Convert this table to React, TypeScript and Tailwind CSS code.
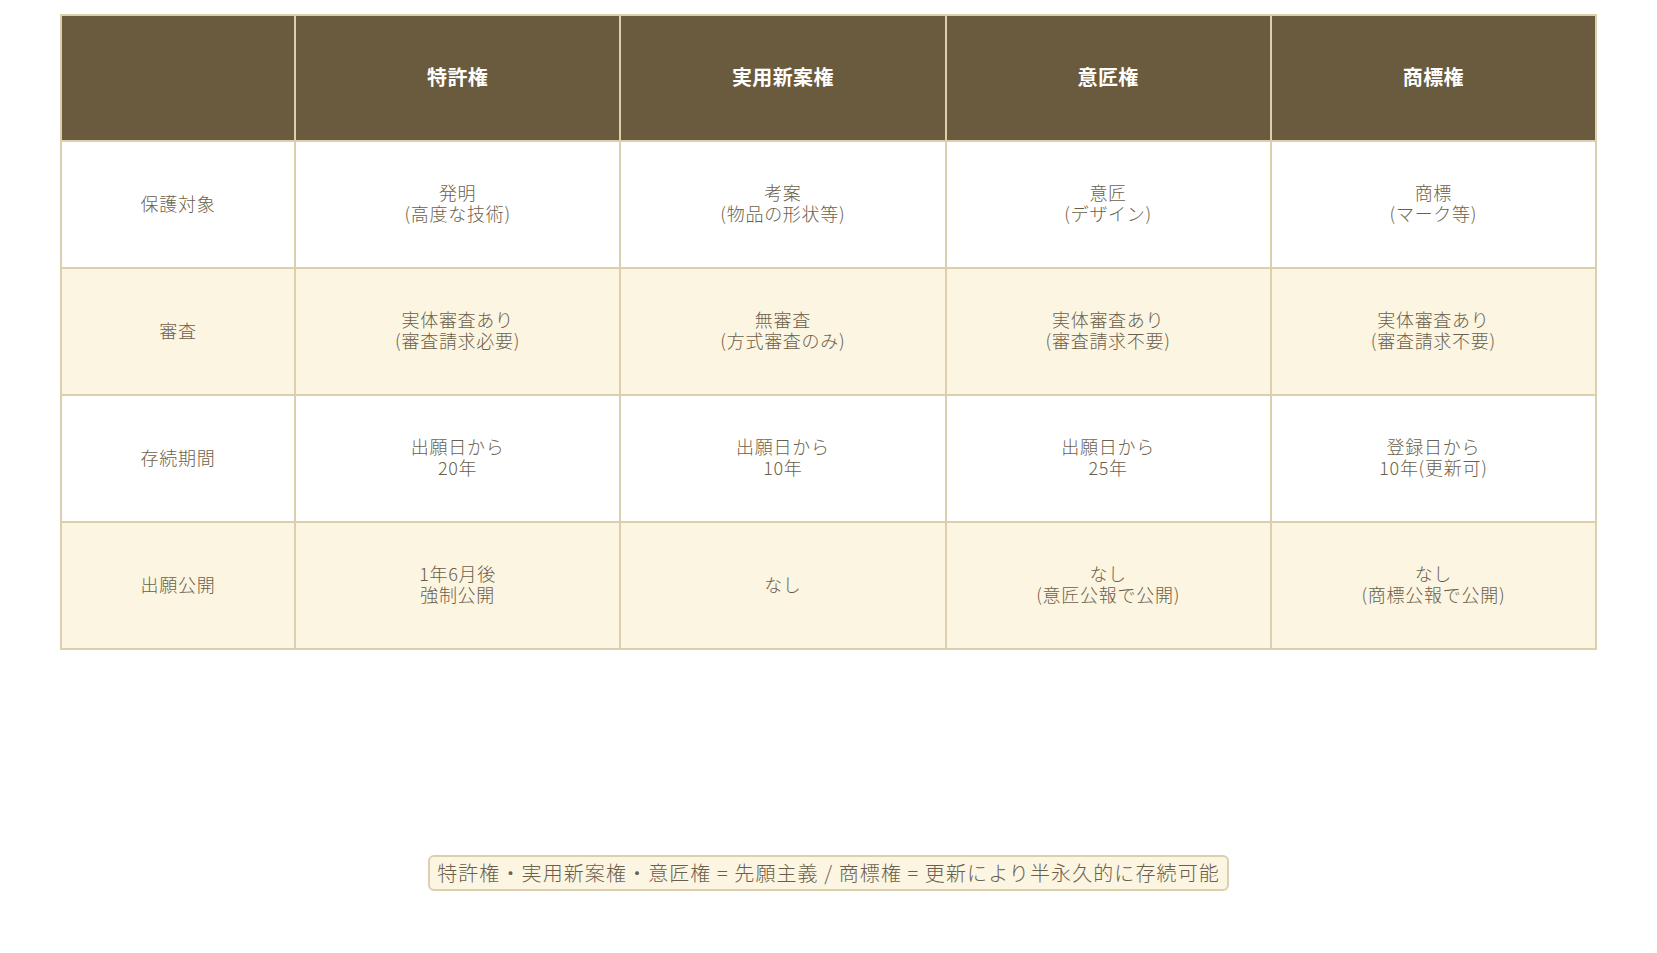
import React from "react";

const headers = ["特許権", "実用新案権", "意匠権", "商標権"];

const rows: { label: string; cells: string[][]; alt: boolean }[] = [
  {
    label: "保護対象",
    alt: false,
    cells: [
      ["発明", "(高度な技術)"],
      ["考案", "(物品の形状等)"],
      ["意匠", "(デザイン)"],
      ["商標", "(マーク等)"],
    ],
  },
  {
    label: "審査",
    alt: true,
    cells: [
      ["実体審査あり", "(審査請求必要)"],
      ["無審査", "(方式審査のみ)"],
      ["実体審査あり", "(審査請求不要)"],
      ["実体審査あり", "(審査請求不要)"],
    ],
  },
  {
    label: "存続期間",
    alt: false,
    cells: [
      ["出願日から", "20年"],
      ["出願日から", "10年"],
      ["出願日から", "25年"],
      ["登録日から", "10年(更新可)"],
    ],
  },
  {
    label: "出願公開",
    alt: true,
    cells: [
      ["1年6月後", "強制公開"],
      ["なし"],
      ["なし", "(意匠公報で公開)"],
      ["なし", "(商標公報で公開)"],
    ],
  },
];

export default function App() {
  return (
    <div
      className="w-[1657px] h-[953px] bg-white px-[60px] pt-[14px]"
      style={{ fontFamily: '"Noto Sans CJK JP", "Noto Sans", sans-serif' }}
    >
      <table className="w-full border-collapse table-fixed">
        <colgroup>
          <col className="w-[234px]" />
          <col />
          <col />
          <col />
          <col />
        </colgroup>
        <thead>
          <tr className="h-[126px] bg-[#6b5b3e]">
            <th className="border-2 border-[#dccfae]"></th>
            {headers.map((h) => (
              <th
                key={h}
                className="border-2 border-[#dccfae] pb-[3px] text-center align-middle text-[20px] font-bold tracking-[0.02em] text-white"
              >
                {h}
              </th>
            ))}
          </tr>
        </thead>
        <tbody>
          {rows.map((r) => (
            <tr
              key={r.label}
              className={r.alt ? "h-[127px] bg-[#fcf5e2]" : "h-[127px] bg-white"}
            >
              <td className="border-2 border-[#dccfae] pb-[3px] text-center align-middle text-[18px] leading-[21px] font-light tracking-[0.04em] text-[#6b5f4b]">
                {r.label}
              </td>
              {r.cells.map((c, i) => (
                <td
                  key={i}
                  className="border-2 border-[#dccfae] pb-[3px] text-center align-middle text-[18px] leading-[21px] font-light tracking-[0.04em] text-[#6b5f4b]"
                >
                  {c.map((line, j) => (
                    <div key={j}>{line}</div>
                  ))}
                </td>
              ))}
            </tr>
          ))}
        </tbody>
      </table>
      <div className="flex justify-center mt-[205px]">
        <div className="rounded-[6px] border-2 border-[#dccfae] bg-[#fcf5e2] px-[7px] py-[1px] text-[20px] leading-[30px] font-light tracking-[0.055em] text-[#6b5f4b] whitespace-pre">
          {"特許権・実用新案権・意匠権 = 先願主義 / 商標権 = 更新により半永久的に存続可能"}
        </div>
      </div>
    </div>
  );
}
